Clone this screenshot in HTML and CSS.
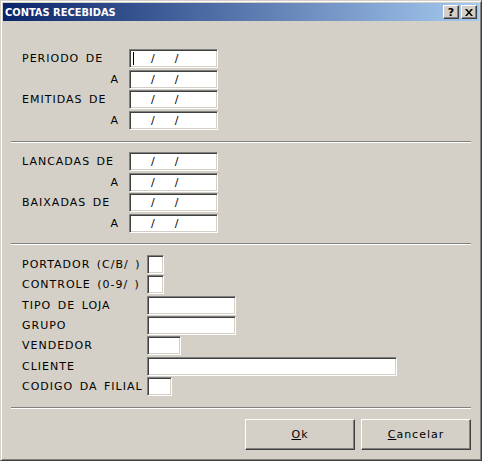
FILE: index.html
```html
<!DOCTYPE html>
<html lang="pt">
<head>
    <meta charset="UTF-8">
    <title>Contas Recebidas</title>
    <link rel="stylesheet" href="styles.css">
</head>
<body>
    <div class="window">
        <div class="titlebar">
            <span class="title">CONTAS RECEBIDAS</span>
            <div class="title-buttons">
                <span class="tbtn help">?</span>
                <span class="tbtn">
                    <svg width="8" height="7" viewBox="0 0 8 7"><path d="M0 0h2l2 2.5 2-2.5h2L5 3.5 8 7H6L4 4.5 2 7H0l3-3.5z" fill="#000"/></svg>
                </span>
            </div>
        </div>

        <div class="client">
            <!-- Periodo / emissao -->
            <div class="group dates">
                <div class="row">
                    <label class="lbl">PERIODO DE</label>
                    <div class="field date"><span class="caret"></span><span class="mask">/</span><span class="mask">/</span></div>
                </div>
                <div class="row">
                    <label class="lbl right">A</label>
                    <div class="field date"><span class="mask">/</span><span class="mask">/</span></div>
                </div>
                <div class="row">
                    <label class="lbl">EMITIDAS DE</label>
                    <div class="field date"><span class="mask">/</span><span class="mask">/</span></div>
                </div>
                <div class="row">
                    <label class="lbl right">A</label>
                    <div class="field date"><span class="mask">/</span><span class="mask">/</span></div>
                </div>
            </div>

            <div class="sep first"></div>

            <!-- Lancamento / baixa -->
            <div class="group dates second">
                <div class="row">
                    <label class="lbl">LANCADAS DE</label>
                    <div class="field date"><span class="mask">/</span><span class="mask">/</span></div>
                </div>
                <div class="row">
                    <label class="lbl right">A</label>
                    <div class="field date"><span class="mask">/</span><span class="mask">/</span></div>
                </div>
                <div class="row">
                    <label class="lbl">BAIXADAS DE</label>
                    <div class="field date"><span class="mask">/</span><span class="mask">/</span></div>
                </div>
                <div class="row">
                    <label class="lbl right">A</label>
                    <div class="field date"><span class="mask">/</span><span class="mask">/</span></div>
                </div>
            </div>

            <div class="sep"></div>

            <!-- Filtros -->
            <div class="group filters">
                <div class="row">
                    <label class="lbl wide">PORTADOR (C/B/ )</label>
                    <div class="field tiny"></div>
                </div>
                <div class="row">
                    <label class="lbl wide">CONTROLE (0-9/ )</label>
                    <div class="field tiny"></div>
                </div>
                <div class="row">
                    <label class="lbl wide">TIPO DE LOJA</label>
                    <div class="field medium"></div>
                </div>
                <div class="row">
                    <label class="lbl wide">GRUPO</label>
                    <div class="field medium"></div>
                </div>
                <div class="row">
                    <label class="lbl wide">VENDEDOR</label>
                    <div class="field short"></div>
                </div>
                <div class="row">
                    <label class="lbl wide">CLIENTE</label>
                    <div class="field long"></div>
                </div>
                <div class="row">
                    <label class="lbl wide">CODIGO DA FILIAL</label>
                    <div class="field filial"></div>
                </div>
            </div>

            <div class="sep"></div>

            <div class="button-container">
                <button class="btn"><u>O</u>k</button>
                <button class="btn"><u>C</u>ancelar</button>
            </div>
        </div>
    </div>
</body>
</html>
```

FILE: styles.css
```css
body {
    margin: 0;
    background-color: #d4d0c8;
    font-family: "DejaVu Sans", Verdana, sans-serif;
    font-size: 11px;
    color: #000;
}
.window {
    width: 482px;
    height: 461px;
    box-sizing: border-box;
    background-color: #d4d0c8;
    border: 1px solid;
    border-color: #d4d0c8 #404040 #404040 #d4d0c8;
    box-shadow: inset 1px 1px #fff, inset -1px -1px #808080;
    padding: 2px;
}
.titlebar {
    height: 18px;
    display: flex;
    align-items: center;
    justify-content: space-between;
    background: linear-gradient(to right, #0a246a, #a6caf0);
}
.title {
    color: #fff;
    font-family: "DejaVu Sans Condensed", "DejaVu Sans", sans-serif;
    font-weight: bold;
    padding-left: 2px;
}
.title-buttons {
    display: flex;
    gap: 2px;
    padding-right: 2px;
}
.tbtn {
    width: 16px;
    height: 14px;
    box-sizing: border-box;
    display: flex;
    align-items: center;
    justify-content: center;
    background-color: #d4d0c8;
    border: 1px solid;
    border-color: #fff #404040 #404040 #fff;
    box-shadow: inset -1px -1px #808080;
    font-weight: bold;
    font-size: 11px;
    line-height: 1;
}
.client {
    margin-top: 1px;
    padding: 0 8px;
}
.group {
    display: flex;
    flex-direction: column;
    justify-content: space-between;
    padding-left: 11px;
}
.dates {
    height: 81px;
    margin-top: 28px;
}
.dates.second {
    margin-top: 9px;
}
.filters {
    height: 141px;
    margin-top: 10px;
}
.row {
    display: flex;
    align-items: center;
    height: 19px;
}
.lbl {
    width: 107px;
    flex-shrink: 0;
    letter-spacing: 1px;
    word-spacing: 2px;
}
.lbl.right {
    text-align: right;
    padding-right: 10px;
    box-sizing: border-box;
}
.lbl.wide {
    width: 125px;
}
.field {
    height: 19px;
    box-sizing: border-box;
    background-color: #fff;
    border: 1px solid;
    border-color: #808080 #fff #fff #808080;
    box-shadow: inset 1px 1px #404040, inset -1px -1px #d4d0c8;
}
.date {
    position: relative;
    width: 89px;
    display: flex;
    align-items: center;
    padding-left: 21px;
}
.mask {
    margin-right: 20px;
}
.caret {
    position: absolute;
    left: 3px;
    top: 2px;
    width: 1px;
    height: 13px;
    background-color: #000;
}
.tiny { width: 17px; }
.medium { width: 89px; }
.short { width: 34px; }
.long { width: 250px; }
.filial { width: 25px; }
.sep {
    height: 0;
    margin-top: 10px;
    border-top: 1px solid #808080;
    border-bottom: 1px solid #fff;
}
.sep.first {
    margin-top: 11px;
}
.filters + .sep {
    margin-top: 11px;
}
.button-container {
    display: flex;
    justify-content: flex-end;
    gap: 6px;
    margin-top: 10px;
}
.btn {
    width: 110px;
    height: 31px;
    background-color: #d4d0c8;
    border: 1px solid;
    border-color: #fff #404040 #404040 #fff;
    box-shadow: inset -1px -1px #808080;
    font-family: "DejaVu Sans", Verdana, sans-serif;
    font-size: 11px;
    letter-spacing: 1px;
    color: #000;
    padding: 0;
}
```
